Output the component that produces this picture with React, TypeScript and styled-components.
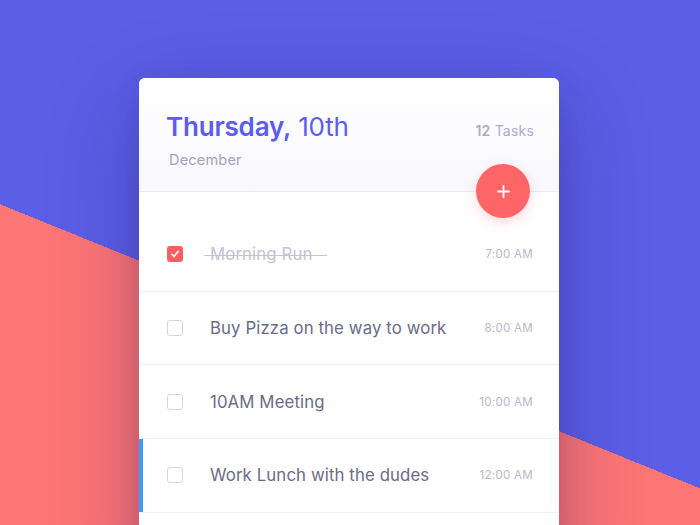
import React from "react";
import styled, { createGlobalStyle, css } from "styled-components";

const Global = createGlobalStyle`
  html, body { margin: 0; padding: 0; }
  body { font-family: Inter, "Noto Sans", sans-serif; -webkit-font-smoothing: antialiased; }
`;

const Stage = styled.div`
  width: 700px;
  height: 525px;
  overflow: hidden;
  background: linear-gradient(202.09deg, #5b5fe7 452.5px, #fe7676 452.5px);
  display: flex;
  justify-content: center;
  padding-top: 78px;
  box-sizing: border-box;
`;

const Card = styled.div`
  width: 420px;
  margin-left: -2px;
  align-self: flex-start;
  background: #fff;
  border-radius: 6px;
  box-shadow: 0 30px 90px rgba(30, 20, 90, 0.3), 0 8px 30px rgba(30, 20, 90, 0.12);
  padding-bottom: 60px;
`;

const Header = styled.header`
  position: relative;
  height: 114px;
  box-sizing: border-box;
  padding: 33px 25px 0 27px;
  background: linear-gradient(180deg, #ffffff 0%, #f8f8fd 100%);
  border-bottom: 1px solid #ebebf3;
  border-radius: 6px 6px 0 0;
`;

const TitleRow = styled.div`
  display: flex;
  justify-content: space-between;
  align-items: baseline;
`;

const Title = styled.h1`
  margin: 0;
  font-size: 26px;
  line-height: 32px;
  font-weight: 400;
  color: #5a5df0;
  letter-spacing: -0.2px;
`;

const Strong = styled.span`
  font-weight: 600;
`;

const Count = styled.div`
  font-size: 14px;
  color: #ababc9;
  letter-spacing: 0.2px;
`;

const CountNum = styled.span`
  font-weight: 600;
`;

const Month = styled.div`
  margin-top: 8px;
  margin-left: 3px;
  font-size: 14.5px;
  color: #a3a3bb;
  letter-spacing: 0.2px;
`;

const Fab = styled.button`
  position: absolute;
  right: 29px;
  bottom: -27px;
  width: 54px;
  height: 54px;
  border-radius: 50%;
  border: none;
  background: #fd6566;
  box-shadow: 0 4px 12px rgba(253, 101, 102, 0.25);
  display: flex;
  align-items: center;
  justify-content: center;
  padding: 0;
`;

const List = styled.ul`
  list-style: none;
  margin: 0;
  padding: 26px 0 0;
`;

const Row = styled.li<{ $active?: boolean }>`
  height: 72.7px;
  border-bottom: 1px solid #f0f0f6;
  display: flex;
  align-items: center;
  padding: 0 26px 0 28px;
  ${(p) =>
    p.$active &&
    css`
      box-shadow: inset 4px 0 0 #3a9ffb;
    `}
`;

const Box = styled.span<{ $checked?: boolean }>`
  width: 16px;
  height: 16px;
  box-sizing: border-box;
  border-radius: 3px;
  flex: none;
  display: flex;
  align-items: center;
  justify-content: center;
  ${(p) =>
    p.$checked
      ? css`
          background: #f75f61;
        `
      : css`
          border: 1.5px solid #d4d4e4;
        `}
`;

const Label = styled.span<{ $done?: boolean }>`
  position: relative;
  margin-left: 27px;
  flex: 1;
  font-size: 16.8px;
  color: #6b6b88;
  letter-spacing: 0.1px;
  ${(p) =>
    p.$done &&
    css`
      flex: none;
      color: #c3c3d4;
      margin-right: auto;
      &::after {
        content: "";
        position: absolute;
        left: -6px;
        right: -15px;
        top: 52%;
        height: 1.3px;
        background: #c3c3d4;
      }
    `}
`;

const Time = styled.span`
  font-size: 11.5px;
  color: #b7b7cb;
  letter-spacing: 0.3px;
`;

const tasks = [
  { label: "Morning Run", time: "7:00 AM", done: true },
  { label: "Buy Pizza on the way to work", time: "8:00 AM" },
  { label: "10AM Meeting", time: "10:00 AM" },
  { label: "Work Lunch with the dudes", time: "12:00 AM", active: true },
];

export default function App() {
  return (
    <>
      <Global />
      <Stage>
        <Card>
          <Header>
            <TitleRow>
              <Title>
                <Strong>Thursday,</Strong> 10th
              </Title>
              <Count>
                <CountNum>12</CountNum> Tasks
              </Count>
            </TitleRow>
            <Month>December</Month>
            <Fab aria-label="Add task">
              <svg width="13" height="13" viewBox="0 0 13 13">
                <path d="M6.5 1v11M1 6.5h11" stroke="#fff" strokeWidth="1.8" strokeLinecap="round" />
              </svg>
            </Fab>
          </Header>
          <List>
            {tasks.map((t) => (
              <Row key={t.label} $active={t.active}>
                <Box $checked={t.done}>
                  {t.done && (
                    <svg width="10" height="10" viewBox="0 0 10 10">
                      <path d="M2 5.3l2 2.2L8 2.5" fill="none" stroke="#fff" strokeWidth="1.7" strokeLinecap="round" strokeLinejoin="round" />
                    </svg>
                  )}
                </Box>
                <Label $done={t.done}>{t.label}</Label>
                <Time>{t.time}</Time>
              </Row>
            ))}
          </List>
        </Card>
      </Stage>
    </>
  );
}
